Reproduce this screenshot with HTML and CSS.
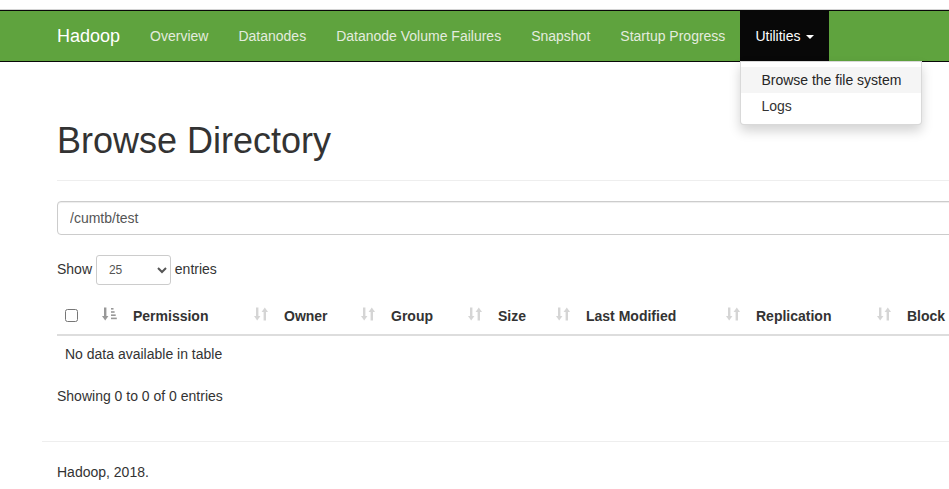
FILE: index.html
```html
<!DOCTYPE html>
<html>
<head>
<meta charset="utf-8">
<title>Browsing HDFS</title>
<link rel="stylesheet" href="styles.css">
</head>
<body>
<header class="navbar">
  <div class="container nav-inner">
    <a class="brand" href="#">Hadoop</a>
    <ul class="nav">
      <li><a href="#">Overview</a></li>
      <li><a href="#">Datanodes</a></li>
      <li><a href="#">Datanode Volume Failures</a></li>
      <li><a href="#">Snapshot</a></li>
      <li><a href="#">Startup Progress</a></li>
      <li class="dropdown open">
        <a href="#" class="active">Utilities <span class="caret"></span></a>
        <ul class="dropdown-menu">
          <li><a href="#" class="hover">Browse the file system</a></li>
          <li><a href="#">Logs</a></li>
        </ul>
      </li>
    </ul>
  </div>
</header>

<main class="container">
  <div class="page-header">
    <h1>Browse Directory</h1>
  </div>

  <input class="path-input" type="text" value="/cumtb/test">

  <div class="length-row">
    <label>Show <select class="length-select"><option>10</option><option selected>25</option><option>50</option><option>100</option></select> entries</label>
  </div>

  <table class="table">
    <colgroup>
      <col class="c-check"><col class="c-perm"><col class="c-owner"><col class="c-group"><col class="c-size"><col class="c-mod"><col class="c-repl"><col class="c-block"><col class="c-name"><col class="c-del">
    </colgroup>
    <thead>
      <tr>
        <th><div class="th-in"><input type="checkbox" class="chk"><svg class="sort asc" viewBox="0 0 15 14" width="15" height="14"><rect x="2" y="0.5" width="2.4" height="9" /><polygon points="0,9 6.4,9 3.2,13.5" /><rect x="9" y="1" width="2.5" height="1.6"/><rect x="9" y="4.2" width="3.6" height="1.6"/><rect x="9" y="7.4" width="4.7" height="1.6"/><rect x="9" y="10.6" width="5.8" height="1.6"/></svg></div></th>
        <th><div class="th-in"><span>Permission</span><svg class="sort" viewBox="0 0 14 14" width="14" height="14"><rect x="2" y="0.5" width="2.4" height="9"/><polygon points="0,9 6.4,9 3.2,13.5"/><polygon points="7.6,5 14,5 10.8,0.5"/><rect x="9.6" y="4.5" width="2.4" height="9"/></svg></div></th>
        <th><div class="th-in"><span>Owner</span><svg class="sort" viewBox="0 0 14 14" width="14" height="14"><rect x="2" y="0.5" width="2.4" height="9"/><polygon points="0,9 6.4,9 3.2,13.5"/><polygon points="7.6,5 14,5 10.8,0.5"/><rect x="9.6" y="4.5" width="2.4" height="9"/></svg></div></th>
        <th><div class="th-in"><span>Group</span><svg class="sort" viewBox="0 0 14 14" width="14" height="14"><rect x="2" y="0.5" width="2.4" height="9"/><polygon points="0,9 6.4,9 3.2,13.5"/><polygon points="7.6,5 14,5 10.8,0.5"/><rect x="9.6" y="4.5" width="2.4" height="9"/></svg></div></th>
        <th><div class="th-in"><span>Size</span><svg class="sort" viewBox="0 0 14 14" width="14" height="14"><rect x="2" y="0.5" width="2.4" height="9"/><polygon points="0,9 6.4,9 3.2,13.5"/><polygon points="7.6,5 14,5 10.8,0.5"/><rect x="9.6" y="4.5" width="2.4" height="9"/></svg></div></th>
        <th><div class="th-in"><span>Last Modified</span><svg class="sort" viewBox="0 0 14 14" width="14" height="14"><rect x="2" y="0.5" width="2.4" height="9"/><polygon points="0,9 6.4,9 3.2,13.5"/><polygon points="7.6,5 14,5 10.8,0.5"/><rect x="9.6" y="4.5" width="2.4" height="9"/></svg></div></th>
        <th><div class="th-in"><span>Replication</span><svg class="sort" viewBox="0 0 14 14" width="14" height="14"><rect x="2" y="0.5" width="2.4" height="9"/><polygon points="0,9 6.4,9 3.2,13.5"/><polygon points="7.6,5 14,5 10.8,0.5"/><rect x="9.6" y="4.5" width="2.4" height="9"/></svg></div></th>
        <th><div class="th-in"><span>Block Size</span><svg class="sort" viewBox="0 0 14 14" width="14" height="14"><rect x="2" y="0.5" width="2.4" height="9"/><polygon points="0,9 6.4,9 3.2,13.5"/><polygon points="7.6,5 14,5 10.8,0.5"/><rect x="9.6" y="4.5" width="2.4" height="9"/></svg></div></th>
        <th><div class="th-in"><span>Name</span><svg class="sort" viewBox="0 0 14 14" width="14" height="14"><rect x="2" y="0.5" width="2.4" height="9"/><polygon points="0,9 6.4,9 3.2,13.5"/><polygon points="7.6,5 14,5 10.8,0.5"/><rect x="9.6" y="4.5" width="2.4" height="9"/></svg></div></th>
        <th></th>
      </tr>
    </thead>
    <tbody>
      <tr><td colspan="10" class="empty">No data available in table</td></tr>
    </tbody>
  </table>

  <div class="info">Showing 0 to 0 of 0 entries</div>

  <hr class="rule">
  <div class="footer">Hadoop, 2018.</div>
</main>
</body>
</html>
```

FILE: styles.css
```css
html, body {
  margin: 0;
  padding: 0;
  overflow: hidden;
  background: #fff;
}

body {
  font-family: "Liberation Sans", Arial, Helvetica, sans-serif;
  font-size: 14px;
  line-height: 20px;
  color: #333;
}

.container {
  width: 1170px;
  box-sizing: border-box;
  margin-left: 42px;
  padding: 0 15px;
}

/* navbar */
.navbar {
  margin-top: 10px;
  margin-bottom: 0;
  width: 1254px;
  background: #5fa33e;
  border-top: 1px solid #080808;
  border-bottom: 1px solid #080808;
  box-shadow: 0 -1px 0 #d4d4d4;
  height: 50px;
}

.nav-inner {
  display: flex;
  align-items: stretch;
  height: 50px;
}

.brand {
  display: block;
  font-size: 18px;
  line-height: 20px;
  padding: 15px 15px;
  margin-left: -15px;
  color: #fff;
  text-decoration: none;
}

.nav {
  display: flex;
  list-style: none;
  margin: 0;
  padding: 0;
}

.nav > li {
  position: relative;
}

.nav > li > a {
  display: block;
  padding: 15px 15px;
  line-height: 20px;
  color: #e4ecdf;
  text-decoration: none;
}

.nav > li > a.active {
  background: #080808;
  color: #fff;
}

.caret {
  display: inline-block;
  width: 0;
  height: 0;
  margin-left: 2px;
  vertical-align: middle;
  border-top: 4px solid #fff;
  border-left: 4px solid transparent;
  border-right: 4px solid transparent;
}

.dropdown-menu {
  position: absolute;
  top: 100%;
  left: 0;
  z-index: 10;
  list-style: none;
  margin: 0;
  padding: 5px 0;
  background: #fff;
  border: 1px solid rgba(0, 0, 0, 0.15);
  border-radius: 0 0 4px 4px;
  box-shadow: 0 6px 12px rgba(0, 0, 0, 0.175);
  white-space: nowrap;
}

.dropdown-menu a {
  display: block;
  padding: 3px 20px;
  line-height: 20px;
  color: #333;
  text-decoration: none;
}

.dropdown-menu a.hover {
  background: #f5f5f5;
  color: #262626;
}

/* page header */
.page-header {
  margin: 59px 0 20px;
  padding-bottom: 9px;
  border-bottom: 1px solid #eee;
}

.page-header h1 {
  margin: 0 0 10px;
  font-size: 36px;
  font-weight: 500;
  line-height: 1.1;
  color: #333;
}

.path-input {
  display: block;
  width: 100%;
  height: 34px;
  box-sizing: border-box;
  padding: 6px 12px;
  font-family: inherit;
  font-size: 14px;
  color: #555;
  border: 1px solid #ccc;
  border-radius: 4px;
  box-shadow: inset 0 1px 1px rgba(0, 0, 0, 0.075);
  margin: 0;
}

.length-row {
  margin-top: 20px;
  height: 30px;
  display: flex;
  align-items: center;
}

.length-row label {
  font-weight: normal;
}

.length-select {
  width: 75px;
  height: 30px;
  box-sizing: border-box;
  padding: 5px 8px;
  font-family: inherit;
  font-size: 12px;
  color: #555;
  border: 1px solid #ccc;
  border-radius: 3px;
  background: #fff;
  margin: 0;
  vertical-align: middle;
}

/* table */
.table {
  width: 100%;
  table-layout: fixed;
  border-collapse: collapse;
  margin-top: 13px;
  margin-bottom: 6px;
}

.c-check { width: 68px; }
.c-perm { width: 151px; }
.c-owner { width: 107px; }
.c-group { width: 107px; }
.c-size { width: 88px; }
.c-mod { width: 170px; }
.c-repl { width: 151px; }
.c-block { width: 120px; }
.c-del { width: 40px; }

.table th {
  padding: 8px;
  text-align: left;
  font-weight: bold;
  line-height: 20px;
  border-bottom: 2px solid #ddd;
  white-space: nowrap;
  overflow: hidden;
}

.th-in {
  display: flex;
  align-items: center;
  justify-content: space-between;
  height: 20px;
}

.chk {
  width: 13px;
  height: 13px;
  margin: 0 0 0 0;
}

.sort {
  fill: #333;
  opacity: 0.2;
  flex: none;
  margin-top: -3px;
}

.sort.asc {
  opacity: 0.5;
}

.table td {
  padding: 8px;
  line-height: 20px;
}

.info {
  padding-top: 8px;
  line-height: 20px;
}

.rule {
  margin: 35px 0 20px -15px;
  border: 0;
  border-top: 1px solid #eee;
  height: 0;
}

.footer {
  line-height: 20px;
}
```
